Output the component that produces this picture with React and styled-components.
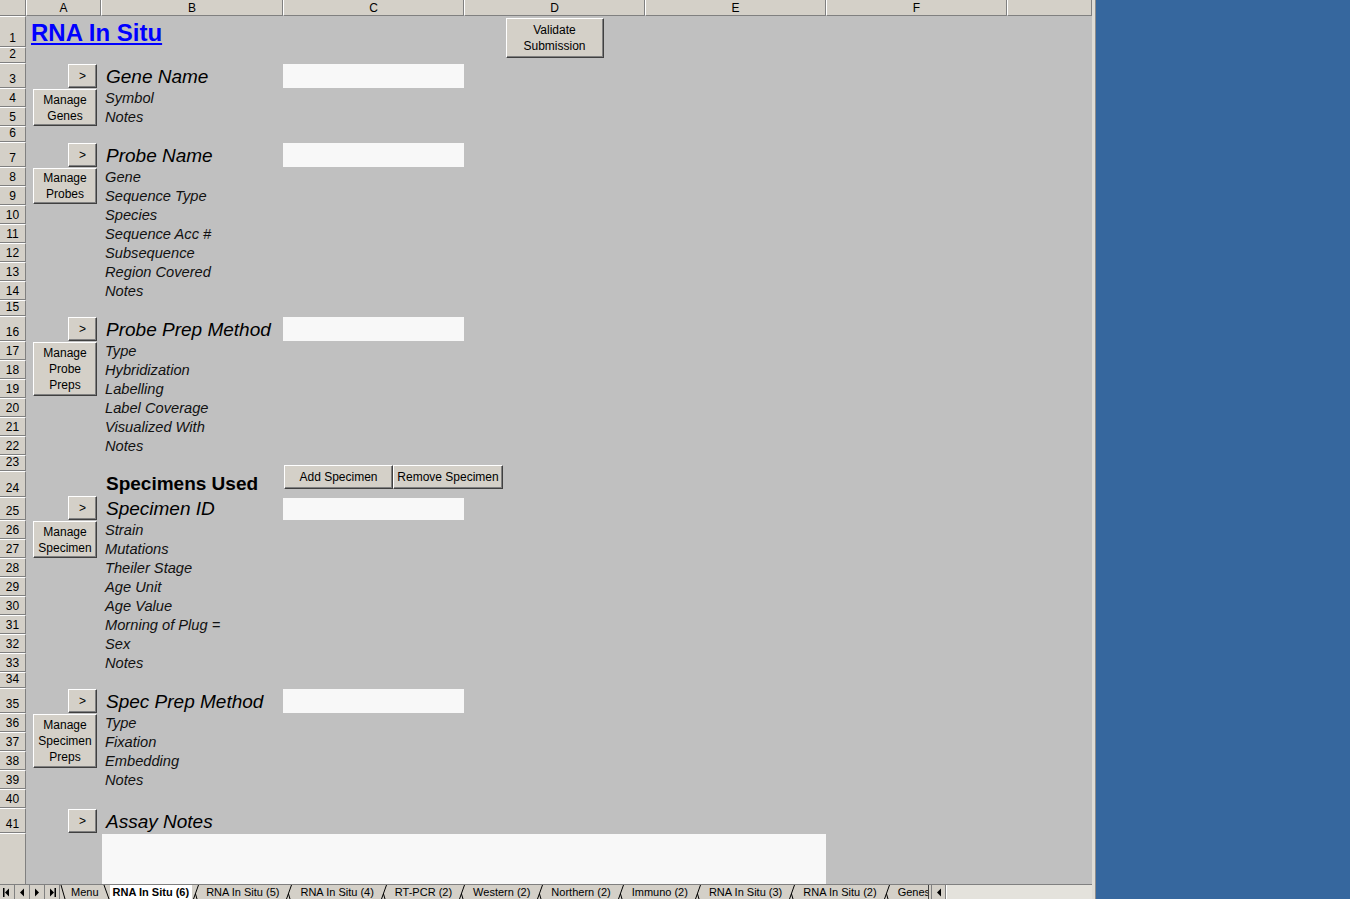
import React from 'react';
import styled, { createGlobalStyle } from 'styled-components';

const GlobalStyle = createGlobalStyle`
  html, body {
    margin: 0;
    padding: 0;
    height: 100%;
    overflow: hidden;
  }
  body {
    font-family: "Liberation Sans", Arial, sans-serif;
  }
  #root {
    height: 100%;
  }
`;

// sheet geometry, taken from the worksheet (header row first, then rows 1..41)
const COL_WIDTHS = [26, 75, 182, 181, 181, 181, 181];
const ROW_HEIGHTS = [
  16,
  31, 16, 25, 19, 19, 16, 25,
  19, 19, 19, 19, 19, 19, 19,
  16, 25,
  19, 19, 19, 19, 19, 19,
  16, 26, 23,
  19, 19, 19, 19, 19, 19, 19, 19,
  16, 25,
  19, 19, 19, 19, 19,
  25,
];
const FILLER_ROW = ROW_HEIGHTS.length + 1;
const COLUMN_LETTERS = ['A', 'B', 'C', 'D', 'E', 'F', ''];

const place = ({ $row, $col, $rowSpan = 1, $colSpan = 1 }) => `
  grid-row: ${$row} / span ${$rowSpan};
  grid-column: ${$col} / span ${$colSpan};
`;

const Desktop = styled.div`
  display: flex;
  height: 100vh;
  background: #36679e;
`;

const ExcelWindow = styled.div`
  display: flex;
  flex-direction: column;
  flex: none;
  width: 1092px;
  border-right: 3px solid #dedcd6;
  box-shadow: 1px 0 0 #8c8c8c;
  background: #c0c0c0;
`;

const Sheet = styled.div`
  flex: 1;
  display: grid;
  grid-template-columns: ${COL_WIDTHS.map(w => `${w}px`).join(' ')} 1fr;
  grid-template-rows: ${ROW_HEIGHTS.map(h => `${h}px`).join(' ')} 1fr;
  background: #c0c0c0;
  overflow: hidden;
`;

const Corner = styled.div`
  grid-row: 1;
  grid-column: 1;
  background: #d4d0c8;
  border-right: 1px solid #808080;
  border-bottom: 1px solid #808080;
`;

const ColumnHeader = styled.div`
  ${place}
  display: flex;
  align-items: center;
  justify-content: center;
  background: #d4d0c8;
  border-left: 1px solid #ffffff;
  border-right: 1px solid #808080;
  border-bottom: 1px solid #808080;
  font-size: 12px;
  color: #000;
`;

const RowHeader = styled.div`
  ${place}
  display: flex;
  align-items: flex-end;
  justify-content: center;
  padding-bottom: 1px;
  background: #d4d0c8;
  border-top: 1px solid #ffffff;
  border-bottom: 1px solid #808080;
  border-right: 1px solid #808080;
  font-size: 12px;
  line-height: 14px;
  color: #000;
`;

const RowHeaderRest = styled(RowHeader)`
  border-bottom: none;
`;

const TitleLink = styled.a`
  ${place}
  align-self: end;
  justify-self: start;
  margin: 0 0 2px 5px;
  font-size: 24px;
  font-weight: bold;
  line-height: 1;
  color: #0000ff;
  text-decoration: underline;
  text-decoration-thickness: 2px;
  text-underline-offset: 2px;
  white-space: nowrap;
`;

const XlButton = styled.button`
  ${place}
  box-sizing: border-box;
  margin: 0;
  padding: 0;
  background: #d4d0c8;
  border: 1px solid;
  border-color: #ffffff #404040 #404040 #ffffff;
  box-shadow: inset -1px -1px 0 #808080;
  font-family: "Liberation Sans", Arial, sans-serif;
  font-size: 12px;
  line-height: 16px;
  color: #000;
  cursor: default;
  white-space: nowrap;
`;

const ValidateButton = styled(XlButton)`
  align-self: start;
  justify-self: center;
  width: 98px;
  height: 40px;
  margin-top: 2px;
`;

const ArrowButton = styled(XlButton)`
  align-self: end;
  justify-self: end;
  width: 29px;
  height: 24px;
  margin-right: 4px;
`;

const ManageButton = styled(XlButton)`
  align-self: start;
  justify-self: end;
  width: 64px;
  height: ${p => p.$h}px;
  margin: 1px 4px 0 0;
`;

const SpecimenButtons = styled.div`
  ${place}
  display: flex;
  align-self: start;
  margin: 10px 0 0 1px;
`;

const SpecimenButton = styled(XlButton)`
  width: ${p => p.$w}px;
  height: 24px;
`;

const Heading = styled.div`
  ${place}
  align-self: end;
  padding: 0 0 2px 5px;
  font-size: 19px;
  font-style: italic;
  line-height: 1;
  color: #000;
  white-space: nowrap;
`;

const GroupTitle = styled(Heading)`
  font-style: normal;
  font-weight: bold;
  padding-bottom: 4px;
`;

const FieldLabel = styled.div`
  ${place}
  align-self: end;
  padding: 0 0 1px 4px;
  font-size: 14.67px;
  font-style: italic;
  line-height: 1;
  color: #111;
  white-space: nowrap;
`;

const InputCell = styled.div`
  ${place}
  background: #f8f8f8;
  margin-top: 1px;
`;

const NotesBox = styled.div`
  ${place}
  background: #f8f8f8;
  margin: 1px 0 0 1px;
`;

const TabBar = styled.div`
  display: flex;
  flex: none;
  box-sizing: border-box;
  height: 15px;
  background: #d4d0c8;
  border-top: 1px solid #808080;
  font-size: 11px;
  line-height: 14px;
  color: #000;
`;

const NavButtons = styled.div`
  display: flex;
  flex: none;
  width: 60px;
`;

const NavButton = styled.div`
  display: flex;
  align-items: center;
  justify-content: center;
  width: 15px;
  border-right: 1px solid #808080;
  box-sizing: border-box;
`;

const TabStrip = styled.div`
  display: flex;
  flex: none;
  width: 868px;
  overflow: hidden;
`;

const Tab = styled.div`
  flex: none;
  padding: 0 ${p => p.$right ?? 6}px 0 ${p => p.$left ?? 6}px;
  background: ${p => (p.$active ? '#ffffff' : 'transparent')};
  font-weight: ${p => (p.$active ? 'bold' : 'normal')};
  white-space: nowrap;
`;

const Separator = styled.svg`
  flex: none;
  display: block;
`;

const Splitter = styled.div`
  flex: none;
  width: 2px;
  background: #d4d0c8;
  border-left: 1px solid #404040;
  border-right: 1px solid #808080;
`;

const ScrollArrow = styled.div`
  display: flex;
  align-items: center;
  justify-content: center;
  flex: none;
  width: 14px;
  border-right: 1px solid #808080;
  box-sizing: border-box;
`;

const ScrollTrack = styled.div`
  flex: 1;
  background: #e4e2dc;
  border-left: 1px solid #ffffff;
`;

const sections = [
  {
    row: 3, title: 'Gene Name', manage: ['Manage', 'Genes'], manageH: 37,
    fields: ['Symbol', 'Notes'],
  },
  {
    row: 7, title: 'Probe Name', manage: ['Manage', 'Probes'], manageH: 36,
    fields: ['Gene', 'Sequence Type', 'Species', 'Sequence Acc #', 'Subsequence', 'Region Covered', 'Notes'],
  },
  {
    row: 16, title: 'Probe Prep Method', manage: ['Manage', 'Probe', 'Preps'], manageH: 54,
    fields: ['Type', 'Hybridization', 'Labelling', 'Label Coverage', 'Visualized With', 'Notes'],
  },
  {
    row: 25, title: 'Specimen ID', manage: ['Manage', 'Specimen'], manageH: 37,
    fields: ['Strain', 'Mutations', 'Theiler Stage', 'Age Unit', 'Age Value', 'Morning of Plug =', 'Sex', 'Notes'],
  },
  {
    row: 35, title: 'Spec Prep Method', manage: ['Manage', 'Specimen', 'Preps'], manageH: 54,
    fields: ['Type', 'Fixation', 'Embedding', 'Notes'],
  },
];

const tabs = [
  'RNA In Situ (5)', 'RNA In Situ (4)', 'RT-PCR (2)', 'Western (2)', 'Northern (2)',
  'Immuno (2)', 'RNA In Situ (3)', 'RNA In Situ (2)', 'Genes',
];

// sheet row n lives in grid track n + 1 (track 1 is the column header)
const track = n => n + 1;

const BackSlash = ({ w = 7 }) => (
  <Separator width={w} height="14" viewBox={`0 0 ${w} 14`}>
    <line x1="1" y1="0" x2={w - 1} y2="14" stroke="#000" strokeWidth="1" />
  </Separator>
);

const ForwardSlash = () => (
  <Separator width="9" height="14" viewBox="0 0 9 14">
    <line x1="1.5" y1="14" x2="6.5" y2="0" stroke="#000" strokeWidth="1" />
    <line x1="3.5" y1="9" x2="5" y2="14" stroke="#000" strokeWidth="1" />
  </Separator>
);

const Triangle = ({ left, bar }) => (
  <svg width="8" height="9" viewBox="0 0 8 9">
    {left ? <polygon points="6,0.5 6,8.5 2,4.5" fill="#000" /> : <polygon points="2,0.5 2,8.5 6,4.5" fill="#000" />}
    {bar && (left
      ? <rect x="0" y="0" width="1.5" height="9" fill="#000" />
      : <rect x="6.5" y="0" width="1.5" height="9" fill="#000" />)}
  </svg>
);

function Section({ s }) {
  const r = track(s.row);
  return (
    <>
      <ArrowButton $row={r} $col={2}>&gt;</ArrowButton>
      <Heading $row={r} $col={3}>{s.title}</Heading>
      <InputCell $row={r} $col={4} />
      <ManageButton $row={r + 1} $col={2} $rowSpan={s.manage.length} $h={s.manageH}>
        {s.manage.map((line, i) => (
          <React.Fragment key={i}>
            {i > 0 && <br />}
            {line}
          </React.Fragment>
        ))}
      </ManageButton>
      {s.fields.map((f, i) => (
        <FieldLabel key={f + i} $row={r + 1 + i} $col={3}>{f}</FieldLabel>
      ))}
    </>
  );
}

export default function App() {
  return (
    <Desktop>
      <GlobalStyle />
      <ExcelWindow>
        <Sheet>
          <Corner />
          {COLUMN_LETTERS.map((letter, i) => (
            <ColumnHeader key={i} $row={1} $col={i + 2}>{letter}</ColumnHeader>
          ))}
          {ROW_HEIGHTS.slice(1).map((_, i) => (
            <RowHeader key={i} $row={track(i + 1)} $col={1}>{i + 1}</RowHeader>
          ))}
          <RowHeaderRest $row={FILLER_ROW} $col={1} />

          <TitleLink href="#" $row={track(1)} $col={2} $colSpan={3}>RNA In Situ</TitleLink>
          <ValidateButton $row={track(1)} $col={5} $rowSpan={2}>
            Validate<br />Submission
          </ValidateButton>

          {sections.slice(0, 3).map(s => <Section key={s.row} s={s} />)}

          <GroupTitle $row={track(24)} $col={3}>Specimens Used</GroupTitle>
          <SpecimenButtons $row={track(23)} $col={4} $rowSpan={2} $colSpan={2}>
            <SpecimenButton $w={109}>Add Specimen</SpecimenButton>
            <SpecimenButton $w={110}>Remove Specimen</SpecimenButton>
          </SpecimenButtons>

          {sections.slice(3).map(s => <Section key={s.row} s={s} />)}

          <ArrowButton $row={track(41)} $col={2}>&gt;</ArrowButton>
          <Heading $row={track(41)} $col={3}>Assay Notes</Heading>
          <NotesBox $row={FILLER_ROW} $col={3} $colSpan={4} />
        </Sheet>

        <TabBar>
          <NavButtons>
            <NavButton><Triangle left bar /></NavButton>
            <NavButton><Triangle left /></NavButton>
            <NavButton><Triangle /></NavButton>
            <NavButton><Triangle bar /></NavButton>
          </NavButtons>
          <TabStrip>
            <BackSlash w={6} />
            <Tab $left={5} $right={4}>Menu</Tab>
            <BackSlash w={7} />
            <Tab $active $left={3} $right={3}>RNA In Situ (6)</Tab>
            {tabs.map((t, i) => (
              <React.Fragment key={t}>
                <ForwardSlash />
                <Tab $left={i === 0 ? 5 : 6}>{t}</Tab>
              </React.Fragment>
            ))}
          </TabStrip>
          <Splitter />
          <ScrollArrow><Triangle left /></ScrollArrow>
          <ScrollTrack />
        </TabBar>
      </ExcelWindow>
    </Desktop>
  );
}
